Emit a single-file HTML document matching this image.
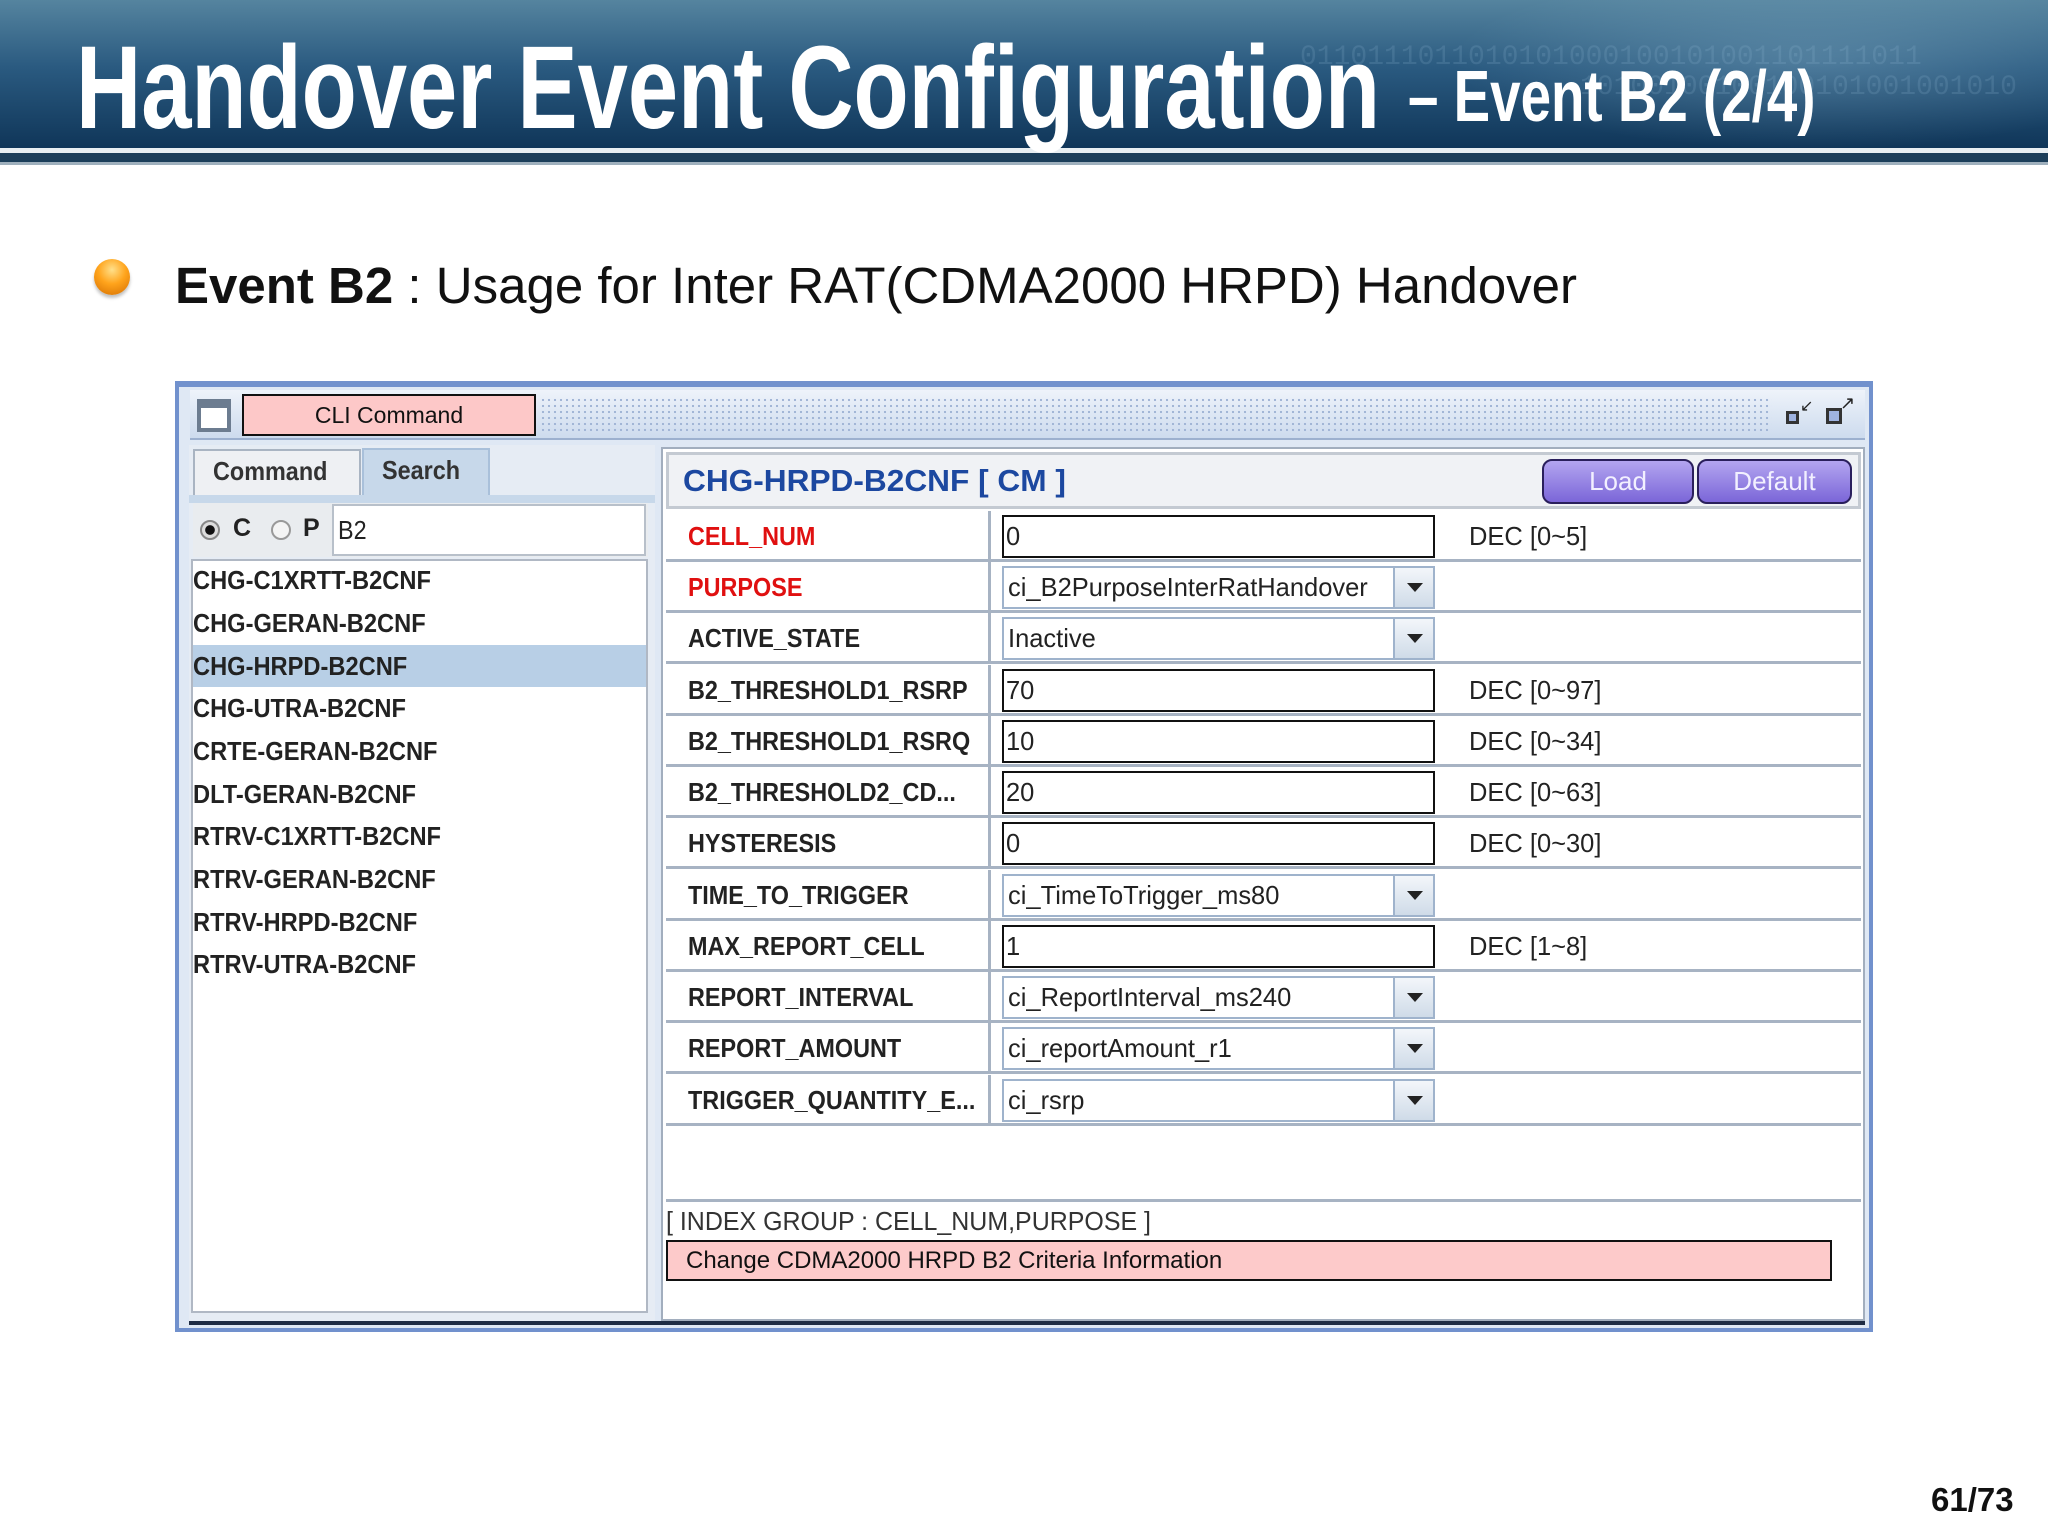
<!DOCTYPE html>
<html><head><meta charset="utf-8"><style>
*{margin:0;padding:0;box-sizing:border-box}
body{width:2048px;height:1536px;background:#fff;position:relative;overflow:hidden;font-family:"Liberation Sans",sans-serif}
.a{position:absolute}
.hdr{left:0;top:0;width:2048px;height:150px;background:linear-gradient(#55849f 0%,#2a5a80 45%,#0f3558 100%)}
.t{white-space:nowrap;color:#fff;transform-origin:left top}
.lbl{position:absolute;left:688px;font-weight:bold;font-size:26px;color:#222;transform:scaleX(.9);transform-origin:left center;white-space:nowrap;line-height:51px}
.row{position:absolute;left:666px;width:1195px;height:51px;border-bottom:3px solid #a7b3c3}
.row .sep{position:absolute;left:322px;top:0;width:3px;height:51px;background:#a7b3c3}
.inp{position:absolute;left:1002px;width:433px;height:43px;border:2px solid #111;background:#fff;font-size:26px;line-height:39px;padding-left:2px;color:#222}
.inp span,.cb span{display:inline-block;transform:scaleX(.98);transform-origin:left center;white-space:nowrap}
.cb{position:absolute;left:1002px;width:433px;height:43px;border:2px solid #9fb3cc;background:#fff;font-size:26px;line-height:39px;padding-left:4px;color:#222;overflow:hidden}
.cb .btn{position:absolute;right:0;top:0;width:40px;height:39px;background:linear-gradient(#f3f6fa,#cfdbe8);border-left:2px solid #9fb3cc}
.cb .btn:after{content:"";position:absolute;left:12px;top:15px;border-left:8px solid transparent;border-right:8px solid transparent;border-top:9px solid #222}
.dec{position:absolute;left:1469px;font-size:26px;color:#222;line-height:51px}
.dec span{display:inline-block;transform:scaleX(.98);transform-origin:left center}
.li{position:absolute;left:193px;width:452px;height:43px;font-weight:bold;font-size:26px;line-height:43px;color:#222}
.li span{display:inline-block;transform:scaleX(.91);transform-origin:left center;white-space:nowrap}
</style></head><body>
<div class="a hdr"></div>
<div class="a" style="left:1450px;top:0;width:598px;height:150px;background:radial-gradient(ellipse at 60% 40%,rgba(160,200,220,.3),rgba(0,0,0,0) 70%)"></div>
<div class="a" style="left:1300px;top:42px;font-size:28px;color:rgba(150,190,215,.18);font-family:'Liberation Mono',monospace;white-space:nowrap">0110111011010101000100101001101111011</div>
<div class="a" style="left:1580px;top:72px;font-size:28px;color:rgba(150,190,215,.18);font-family:'Liberation Mono',monospace;white-space:nowrap">10100100100100101001001010</div>
<div class="a" style="left:0;top:148px;width:2048px;height:5px;background:#e8eef2"></div>
<div class="a" style="left:0;top:153px;width:2048px;height:9px;background:#1c3e5a"></div>
<div class="a" style="left:0;top:162px;width:2048px;height:3px;background:#9fb0bd"></div>
<div class="a t" style="left:76px;top:20px;font-size:118px;font-weight:bold;transform:scaleX(.765)">Handover Event Configuration</div>
<div class="a t" style="left:1408px;top:56px;font-size:72px;font-weight:bold;transform:scaleX(.76)">– Event B2 (2/4)</div>

<div class="a" style="left:94px;top:259px;width:36px;height:36px;border-radius:50%;background:radial-gradient(circle at 50% 30%,#ffe08a 0%,#ffa41c 45%,#d46d00 100%);box-shadow:0 3px 3px rgba(0,0,0,.25)"></div>
<div class="a" style="left:175px;top:256px;font-size:51px;color:#111;white-space:nowrap"><b>Event B2</b> : Usage for Inter RAT(CDMA2000 HRPD) Handover</div>

<!-- window -->
<div class="a" style="left:175px;top:381px;width:1698px;height:951px;background:#dfe8f4;border:4px solid #7191cd;border-top-width:6px"></div>
<div class="a" style="left:190px;top:390px;width:1675px;height:50px;background:linear-gradient(#eef3fa,#cddbee);border-bottom:2px solid #9cb0cf"></div>
<div class="a" style="left:540px;top:397px;width:1232px;height:36px;background-image:radial-gradient(#9fb3d4 1px,transparent 1.3px);background-size:6px 6px"></div>
<div class="a" style="left:197px;top:399px;width:34px;height:33px;border:4px solid #6c7c90;background:#fff;border-top-width:9px"></div>
<div class="a" style="left:242px;top:394px;width:294px;height:42px;background:#fdc8c8;border:2px solid #111;font-size:23px;text-align:center;line-height:38px;color:#111">CLI Command</div>
<div class="a" style="left:1786px;top:411px;width:13px;height:13px;border:3px solid #333;background:#9fb3e0"></div>
<div class="a" style="left:1800px;top:396px;font-size:16px;color:#222">↙</div>
<div class="a" style="left:1826px;top:408px;width:16px;height:16px;border:3px solid #333;background:#9fb3e0"></div>
<div class="a" style="left:1840px;top:393px;font-size:18px;color:#222">↗</div>

<!-- left panel -->
<div class="a" style="left:189px;top:445px;width:466px;height:876px;background:#e6ecf4"></div>
<div class="a" style="left:193px;top:449px;width:168px;height:46px;background:#eef0f3;border:2px solid #a9b4c2;border-bottom:none;font-weight:bold;font-size:26px;line-height:40px;padding-left:18px;color:#333"><span style="display:inline-block;transform:scaleX(.9);transform-origin:left">Command</span></div>
<div class="a" style="left:362px;top:448px;width:128px;height:50px;background:#c7d8ea;border:2px solid #a9c0da;border-bottom:none;font-weight:bold;font-size:26px;line-height:40px;padding-left:18px;color:#333"><span style="display:inline-block;transform:scaleX(.9);transform-origin:left">Search</span></div>
<div class="a" style="left:189px;top:495px;width:466px;height:8px;background:#c7d8ea"></div>
<div class="a" style="left:193px;top:503px;width:455px;height:54px;background:#e9ecef"></div>
<div class="a" style="left:200px;top:520px;width:20px;height:20px;border-radius:50%;border:2px solid #888;background:radial-gradient(#111 40%,#ddd 45%)"></div>
<div class="a" style="left:233px;top:514px;font-weight:bold;font-size:25px;color:#222">C</div>
<div class="a" style="left:271px;top:520px;width:20px;height:20px;border-radius:50%;border:2px solid #999;background:#f4f4f4"></div>
<div class="a" style="left:303px;top:514px;font-weight:bold;font-size:25px;color:#222">P</div>
<div class="a" style="left:332px;top:504px;width:314px;height:52px;background:#fff;border:2px solid #b8c0ca;font-size:26px;line-height:48px;padding-left:4px;color:#222"><span style="display:inline-block;transform:scaleX(.9);transform-origin:left">B2</span></div>
<div class="a" style="left:191px;top:559px;width:457px;height:754px;background:#fff;border:2px solid #b0b8c4"></div>
<div class="a" style="left:193px;top:645px;width:453px;height:42px;background:#b8cfe6"></div>
<div class="li" style="top:559px"><span>CHG-C1XRTT-B2CNF</span></div>
<div class="li" style="top:602px"><span>CHG-GERAN-B2CNF</span></div>
<div class="li" style="top:645px"><span>CHG-HRPD-B2CNF</span></div>
<div class="li" style="top:687px"><span>CHG-UTRA-B2CNF</span></div>
<div class="li" style="top:730px"><span>CRTE-GERAN-B2CNF</span></div>
<div class="li" style="top:773px"><span>DLT-GERAN-B2CNF</span></div>
<div class="li" style="top:815px"><span>RTRV-C1XRTT-B2CNF</span></div>
<div class="li" style="top:858px"><span>RTRV-GERAN-B2CNF</span></div>
<div class="li" style="top:901px"><span>RTRV-HRPD-B2CNF</span></div>
<div class="li" style="top:943px"><span>RTRV-UTRA-B2CNF</span></div>

<!-- right panel -->
<div class="a" style="left:661px;top:447px;width:1204px;height:874px;background:#fff;border:2px solid #a2aebe"></div>
<div class="a" style="left:666px;top:452px;width:1195px;height:57px;background:#f0f2f5;border:3px solid #c4cad2"></div>
<div class="a" style="left:683px;top:459px;font-weight:bold;font-size:31px;color:#1c48a0;line-height:44px;white-space:nowrap"><span style="display:inline-block;transform:scaleX(1.02);transform-origin:left">CHG-HRPD-B2CNF [ CM ]</span></div>
<div class="a" style="left:1542px;top:459px;width:152px;height:45px;border:2px solid #2a1f5c;border-radius:10px;background:linear-gradient(#b3a5f0,#7b66d8);color:#f2f0ff;font-size:26px;text-align:center;line-height:41px">Load</div>
<div class="a" style="left:1697px;top:459px;width:155px;height:45px;border:2px solid #2a1f5c;border-radius:10px;background:linear-gradient(#b3a5f0,#7b66d8);color:#f2f0ff;font-size:26px;text-align:center;line-height:41px">Default</div>

<div class="row" style="top:511px"><div class="sep"></div></div>
<div class="row" style="top:562px"><div class="sep"></div></div>
<div class="row" style="top:613px"><div class="sep"></div></div>
<div class="row" style="top:665px"><div class="sep"></div></div>
<div class="row" style="top:716px"><div class="sep"></div></div>
<div class="row" style="top:767px"><div class="sep"></div></div>
<div class="row" style="top:818px"><div class="sep"></div></div>
<div class="row" style="top:870px"><div class="sep"></div></div>
<div class="row" style="top:921px"><div class="sep"></div></div>
<div class="row" style="top:972px"><div class="sep"></div></div>
<div class="row" style="top:1023px"><div class="sep"></div></div>
<div class="row" style="top:1075px"><div class="sep"></div></div>

<div class="lbl" style="top:511px;color:#e01010">CELL_NUM</div>
<div class="lbl" style="top:562px;color:#e01010">PURPOSE</div>
<div class="lbl" style="top:613px">ACTIVE_STATE</div>
<div class="lbl" style="top:665px">B2_THRESHOLD1_RSRP</div>
<div class="lbl" style="top:716px">B2_THRESHOLD1_RSRQ</div>
<div class="lbl" style="top:767px">B2_THRESHOLD2_CD...</div>
<div class="lbl" style="top:818px">HYSTERESIS</div>
<div class="lbl" style="top:870px">TIME_TO_TRIGGER</div>
<div class="lbl" style="top:921px">MAX_REPORT_CELL</div>
<div class="lbl" style="top:972px">REPORT_INTERVAL</div>
<div class="lbl" style="top:1023px">REPORT_AMOUNT</div>
<div class="lbl" style="top:1075px">TRIGGER_QUANTITY_E...</div>

<div class="inp" style="top:515px"><span>0</span></div>
<div class="cb" style="top:566px"><span>ci_B2PurposeInterRatHandover</span><div class="btn"></div></div>
<div class="cb" style="top:617px"><span>Inactive</span><div class="btn"></div></div>
<div class="inp" style="top:669px"><span>70</span></div>
<div class="inp" style="top:720px"><span>10</span></div>
<div class="inp" style="top:771px"><span>20</span></div>
<div class="inp" style="top:822px"><span>0</span></div>
<div class="cb" style="top:874px"><span>ci_TimeToTrigger_ms80</span><div class="btn"></div></div>
<div class="inp" style="top:925px"><span>1</span></div>
<div class="cb" style="top:976px"><span>ci_ReportInterval_ms240</span><div class="btn"></div></div>
<div class="cb" style="top:1027px"><span>ci_reportAmount_r1</span><div class="btn"></div></div>
<div class="cb" style="top:1079px"><span>ci_rsrp</span><div class="btn"></div></div>

<div class="dec" style="top:511px"><span>DEC [0~5]</span></div>
<div class="dec" style="top:665px"><span>DEC [0~97]</span></div>
<div class="dec" style="top:716px"><span>DEC [0~34]</span></div>
<div class="dec" style="top:767px"><span>DEC [0~63]</span></div>
<div class="dec" style="top:818px"><span>DEC [0~30]</span></div>
<div class="dec" style="top:921px"><span>DEC [1~8]</span></div>

<div class="a" style="left:666px;top:1199px;width:1195px;height:3px;background:#a7b3c3"></div>
<div class="a" style="left:666px;top:1205px;font-size:26px;color:#333;white-space:nowrap;line-height:32px"><span style="display:inline-block;transform:scaleX(.96);transform-origin:left">[ INDEX GROUP : CELL_NUM,PURPOSE ]</span></div>
<div class="a" style="left:666px;top:1240px;width:1166px;height:41px;background:#fdcaca;border:2px solid #111;font-size:24px;line-height:37px;padding-left:18px;color:#111">Change CDMA2000 HRPD B2 Criteria Information</div>
<div class="a" style="left:189px;top:1321px;width:1676px;height:4px;background:#1e2c44"></div>

<div class="a" style="left:1931px;top:1481px;font-size:33px;font-weight:bold;color:#111">61/73</div>
</body></html>
